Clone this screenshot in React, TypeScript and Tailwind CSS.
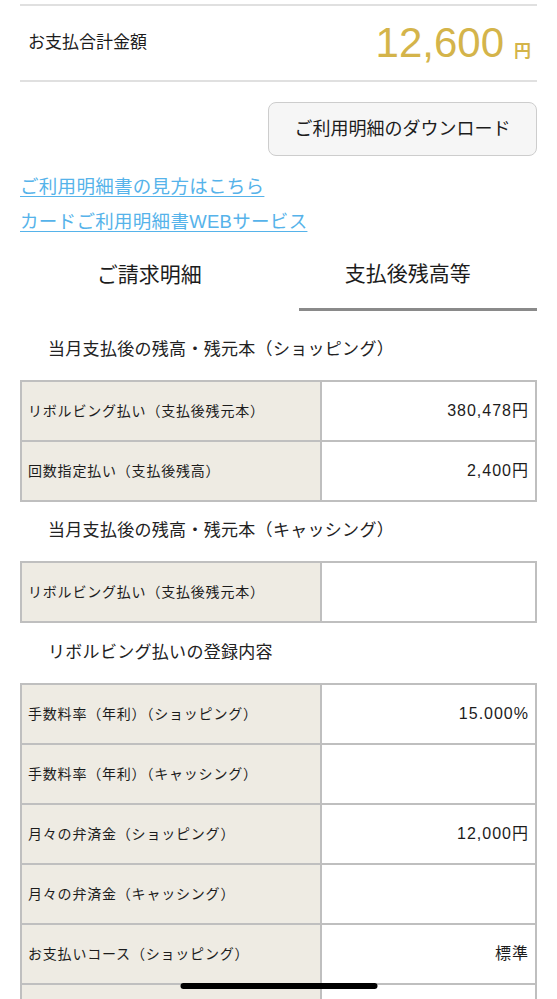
import React from 'react';

type Row = { label: string; value?: string };

const shopping: Row[] = [
  { label: 'リボルビング払い（支払後残元本）', value: '380,478円' },
  { label: '回数指定払い（支払後残高）', value: '2,400円' },
];

const cashing: Row[] = [{ label: 'リボルビング払い（支払後残元本）' }];

const revolving: Row[] = [
  { label: '手数料率（年利）（ショッピング）', value: '15.000%' },
  { label: '手数料率（年利）（キャッシング）' },
  { label: '月々の弁済金（ショッピング）', value: '12,000円' },
  { label: '月々の弁済金（キャッシング）' },
  { label: 'お支払いコース（ショッピング）', value: '標準' },
  { label: 'お支払いコース（キャッシング）' },
];

const DataTable: React.FC<{ rows: Row[] }> = ({ rows }) => (
  <div className="border-2 border-[#bfbfbf]">
    {rows.map((r, i) => (
      <div key={i} className={`flex ${i > 0 ? 'h-[60px] border-t-2 border-[#bfbfbf]' : 'h-[58px]'}`}>
        <div className="w-[300px] shrink-0 bg-[#eeebe3] border-r-2 border-[#bfbfbf] flex items-center pl-[6px] text-[14px] tracking-[0.8px] text-[#1c1c1c]">
          {r.label}
        </div>
        <div className="flex-1 flex items-center justify-end pr-[6px] text-[16px] tracking-[1px] text-[#1c1c1c]">
          {r.value}
        </div>
      </div>
    ))}
  </div>
);

const Heading: React.FC<{ children: React.ReactNode; top: string; bottom: string }> = ({ children, top, bottom }) => (
  <h2 className={`${top} ${bottom} pl-[28px] leading-[24px] text-[17px] tracking-[0.3px] text-[#222]`}>{children}</h2>
);

export default function App() {
  return (
    <div className="min-h-screen bg-white font-['Liberation_Sans','Noto_Sans_CJK_JP',sans-serif] text-[#1c1c1c]">
      <div className="px-[20px] pt-[4px]">
        <div className="h-[78px] border-y-2 border-[#e0e0e0] flex items-center justify-between pl-[8px] pr-[6px]">
          <span className="text-[17px]">お支払合計金額</span>
          <span className="flex items-baseline text-[#d4b44a]">
            <span className="text-[42px] leading-none">12,600</span>
            <span className="ml-[10px] text-[17px] font-bold">円</span>
          </span>
        </div>

        <div className="flex justify-end mt-[20px]">
          <button className="h-[54px] w-[269px] rounded-[8px] border border-[#cdcdcd] bg-[#f6f6f6] text-[18px] text-[#1c1c1c]">
            ご利用明細のダウンロード
          </button>
        </div>

        <div className="mt-[13px] flex flex-col items-start text-[18.5px] leading-[35px] tracking-[0.3px] text-[#56b3ea]">
          <a href="#" className="underline underline-offset-[3px] decoration-1">ご利用明細書の見方はこちら</a>
          <a href="#" className="underline underline-offset-[3px] decoration-1">カードご利用明細書WEBサービス</a>
        </div>

        <div className="grid grid-cols-2 h-[71px] mt-[1px] text-[21px]">
          <div className="flex items-center justify-center pb-[2px]">ご請求明細</div>
          <div className="ml-[20px] flex items-center justify-center border-b-[3px] border-[#8a8a8a] pr-[20px]">
            支払後残高等
          </div>
        </div>

        <Heading top="pt-[27px]" bottom="pb-[18px]">当月支払後の残高・残元本（ショッピング）</Heading>
        <DataTable rows={shopping} />

        <Heading top="pt-[17px]" bottom="pb-[18px]">当月支払後の残高・残元本（キャッシング）</Heading>
        <DataTable rows={cashing} />

        <Heading top="pt-[18px]" bottom="pb-[18px]">リボルビング払いの登録内容</Heading>
        <DataTable rows={revolving} />
        <div className="h-[40px]" />
      </div>

      <div className="fixed bottom-[10px] left-1/2 -translate-x-1/2 w-[197px] h-[6px] rounded-full bg-black" />
    </div>
  );
}
